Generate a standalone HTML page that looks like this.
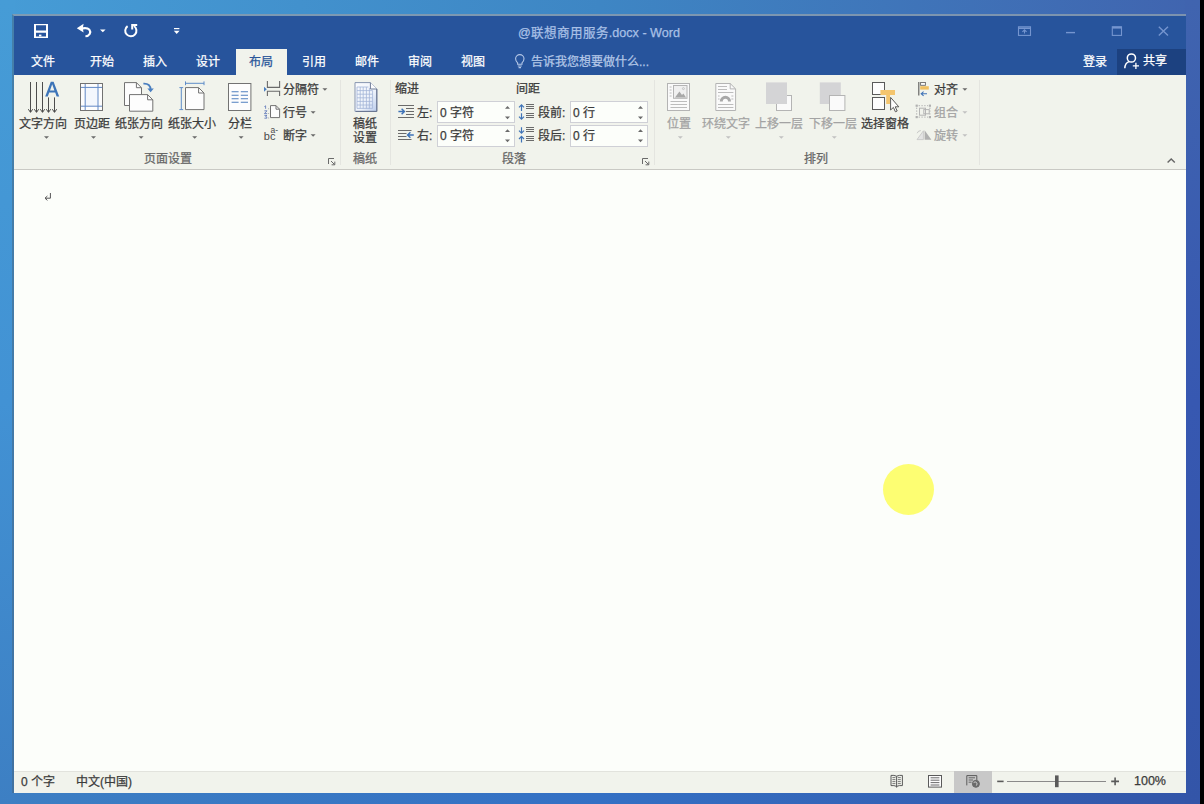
<!DOCTYPE html>
<html lang="zh-CN">
<head>
<meta charset="utf-8">
<title>@联想商用服务.docx - Word</title>
<style>
*{box-sizing:border-box;margin:0;padding:0}
html,body{width:1204px;height:804px;overflow:hidden}
body{position:relative;font-family:"Liberation Sans",sans-serif;font-size:12px;color:#3b3b3b;background:#3c74c0}
#dt{left:0;top:0;width:1200px;height:16px;background:linear-gradient(90deg,#469cd6 0%,#3e86c4 50%,#4064af 100%)}
#db{left:0;top:792px;width:1200px;height:12px;background:linear-gradient(90deg,#3d7fc3 0%,#3470c4 50%,#3355a8 100%)}
#dl{left:0;top:0;width:15px;height:804px;background:linear-gradient(180deg,#469cd6 0%,#4292d4 50%,#3d7fc3 100%)}
#dr{left:1185px;top:0;width:15px;height:804px;background:linear-gradient(180deg,#4064af 0%,#3758b1 50%,#3355a8 100%)}
.abs,.t,.ic,svg.i{position:absolute}
.t{white-space:nowrap;line-height:16px;height:16px;overflow:visible;margin-top:1px;-webkit-text-stroke:.25px currentColor}
.c{text-align:center}
.w{color:#fff}
.g{color:#a3a3a3}
#blk{left:1200px;top:0;width:4px;height:804px;background:#000}
#win{left:12px;top:14px;width:1174px;height:779px;background:#fcfefa;background-clip:padding-box;border-top:2px solid rgba(135,155,175,.85);border-left:2px solid rgba(70,100,125,.5)}
#title{left:14px;top:16px;width:1172px;height:59px;background:#27549c}
#share{left:1117px;top:49px;width:69px;height:26px;background:#1c4180}
#tab{left:236px;top:49px;width:51px;height:27px;background:#f1f3ec}
#ribbon{left:14px;top:75px;width:1172px;height:95px;background:#f1f3ec;border-bottom:1px solid #c9c9c4}
#status{left:14px;top:771px;width:1172px;height:22px;background:#f1f3ec;border-top:1px solid #e2e3dd}
#websel{left:954px;top:771px;width:38px;height:22px;background:#c8c8c8}
.sep{width:1px;background:#e4e5e0;top:80px;height:85px}
.box{background:#fcfefa;border:1px solid #cfd0d6;height:22px}
#dot{left:883px;top:464px;width:51px;height:51px;border-radius:50%;background:#fdfe72}
</style>
</head>
<body>
<div class="abs" id="dt"></div>
<div class="abs" id="db"></div>
<div class="abs" id="dl"></div>
<div class="abs" id="dr"></div>
<div class="abs" id="blk"></div>
<div class="abs" id="win"></div>
<div class="abs" id="title"></div>
<div class="abs" id="share"></div>
<div class="abs" id="tab"></div>
<div class="abs" id="ribbon"></div>
<div class="abs" id="status"></div>
<div class="abs" id="websel"></div>
<div class="abs" id="dot"></div>

<!-- TITLE BAR -->
<div class="t c" style="left:499px;top:24px;width:200px;font-size:12.6px;color:#a9c0e6">@联想商用服务.docx - Word</div>

<!-- TABS -->
<div class="t c w" style="left:23px;top:53px;width:40px">文件</div>
<div class="t c w" style="left:82px;top:53px;width:40px">开始</div>
<div class="t c w" style="left:135px;top:53px;width:40px">插入</div>
<div class="t c w" style="left:188px;top:53px;width:40px">设计</div>
<div class="t c" style="left:241px;top:53px;width:40px;color:#2b579a">布局</div>
<div class="t c w" style="left:294px;top:53px;width:40px">引用</div>
<div class="t c w" style="left:347px;top:53px;width:40px">邮件</div>
<div class="t c w" style="left:400px;top:53px;width:40px">审阅</div>
<div class="t c w" style="left:453px;top:53px;width:40px">视图</div>
<div class="t" style="left:531px;top:53px;color:#b4c7e7">告诉我您想要做什么...</div>
<div class="t c w" style="left:1075px;top:53px;width:40px">登录</div>
<div class="t w" style="left:1143px;top:52px">共享</div>

<!-- RIBBON: 页面设置 -->
<div class="t c" style="left:13px;top:115px;width:60px">文字方向</div>
<div class="t c" style="left:62px;top:115px;width:60px">页边距</div>
<div class="t c" style="left:109px;top:115px;width:60px">纸张方向</div>
<div class="t c" style="left:162px;top:115px;width:60px">纸张大小</div>
<div class="t c" style="left:210px;top:115px;width:60px">分栏</div>
<div class="t" style="left:283px;top:81px">分隔符</div>
<div class="t" style="left:283px;top:104px">行号</div>
<div class="t" style="left:283px;top:127px">断字</div>
<div class="t c" style="left:138px;top:150px;width:60px;color:#666">页面设置</div>

<!-- RIBBON: 稿纸 -->
<div class="t c" style="left:335px;top:115px;width:60px">稿纸</div>
<div class="t c" style="left:335px;top:129px;width:60px">设置</div>
<div class="t c" style="left:335px;top:150px;width:60px;color:#666">稿纸</div>

<!-- RIBBON: 段落 -->
<div class="t" style="left:395px;top:80px">缩进</div>
<div class="t" style="left:516px;top:80px">间距</div>
<div class="t" style="left:417px;top:104px">左:</div>
<div class="t" style="left:417px;top:127px">右:</div>
<div class="t" style="left:538px;top:104px">段前:</div>
<div class="t" style="left:538px;top:127px">段后:</div>
<div class="abs box" style="left:437px;top:101px;width:78px"></div>
<div class="abs box" style="left:437px;top:125px;width:78px;height:22px"></div>
<div class="abs box" style="left:570px;top:101px;width:78px"></div>
<div class="abs box" style="left:570px;top:125px;width:78px;height:22px"></div>
<div class="t" style="left:440px;top:104px">0 字符</div>
<div class="t" style="left:440px;top:127px">0 字符</div>
<div class="t" style="left:573px;top:104px">0 行</div>
<div class="t" style="left:573px;top:127px">0 行</div>
<div class="t c" style="left:484px;top:150px;width:60px;color:#666">段落</div>

<!-- RIBBON: 排列 -->
<div class="t c g" style="left:649px;top:115px;width:60px">位置</div>
<div class="t c g" style="left:696px;top:115px;width:60px">环绕文字</div>
<div class="t c g" style="left:749px;top:115px;width:60px">上移一层</div>
<div class="t c g" style="left:803px;top:115px;width:60px">下移一层</div>
<div class="t c" style="left:855px;top:115px;width:60px">选择窗格</div>
<div class="t" style="left:934px;top:81px">对齐</div>
<div class="t g" style="left:934px;top:104px">组合</div>
<div class="t g" style="left:934px;top:127px">旋转</div>
<div class="t c" style="left:786px;top:150px;width:60px;color:#666">排列</div>

<!-- separators -->
<div class="abs sep" style="left:340px"></div>
<div class="abs sep" style="left:390px"></div>
<div class="abs sep" style="left:654px"></div>
<div class="abs sep" style="left:979px"></div>

<!-- STATUS BAR -->
<div class="t" style="left:21px;top:773px">0 个字</div>
<div class="t" style="left:76px;top:773px">中文(中国)</div>
<div class="t" style="left:1134px;top:772px;font-size:12.5px">100%</div>

<svg class="abs" style="left:0;top:0" width="1204" height="804" viewBox="0 0 1204 804" fill="none">
<!-- ===== QAT ===== -->
<g fill="#fff" stroke="none">
 <path fill-rule="evenodd" d="M34,24H48V38H34Z M36,25.2H46V30.6H36Z M36,32.8H46V36.4H36Z"/>
 <rect x="39" y="34.6" width="2.4" height="1.8"/>
 <path d="M76.8,28.2 L83.6,23.8 L83,27.2 Q88,26.6 90.2,29 Q92.2,31.6 90.6,34.4 Q89,37 85.6,37.2 L85.2,35.4 Q88,35 88.9,33.2 Q89.6,31.2 88.2,29.9 Q86.6,28.8 83,29.4 L83.6,32.4 Z"/>
 <path d="M100,29.4H105.6L102.8,32.3Z"/>
 <rect x="174" y="28" width="5.4" height="1.2"/>
 <path d="M173.8,30.8H179.6L176.7,34Z"/>
</g>
<g stroke="#fff" stroke-width="2" fill="none">
 <path d="M133.9,26 A5.6,5.6 0 1 1 127.6,26.1"/>
 <path d="M132.2,29.4 V24.9 H137.2"/>
</g>
<!-- ===== window controls (inactive tint) ===== -->
<g stroke="#7595cf" stroke-width="1.1" fill="none">
 <rect x="1018.5" y="26.8" width="12" height="8.6"/>
 <path d="M1018.5,28.2H1030.5" stroke-width="1.6"/>
 <path d="M1024.5,33.6V29.8M1022.4,31.8L1024.5,29.8L1026.6,31.8"/>
 <path d="M1066,32.6H1075" stroke-width="1.4"/>
 <rect x="1112.3" y="26.8" width="9.2" height="8.6"/>
 <path d="M1112.3,27.6H1121.5" stroke-width="2"/>
 <path d="M1158.8,26.8L1168,35.6M1168,26.8L1158.8,35.6" stroke-width="1.4"/>
</g>
<!-- lightbulb -->
<g stroke="#b4c7e7" stroke-width="1.1" fill="none">
 <path d="M517.6,64.2 V62.8 Q515.6,61 515.6,58.8 A4.2,4.2 0 0 1 524,58.8 Q524,61 522,62.8 V64.2 Z"/>
 <path d="M517.8,66H521.8M518.6,67.6H521"/>
</g>
<!-- share person -->
<g stroke="#fff" stroke-width="1.5" fill="none">
 <circle cx="1131.4" cy="58" r="4.1"/>
 <path d="M1124.8,68.2 Q1125,63 1129.2,61.6"/>
 <path d="M1132.8,65.8H1139M1135.9,62.7V68.9" stroke-width="1.3"/>
</g>
<!-- ===== status bar icons ===== -->
<g stroke="#5a5a5a" stroke-width="1" fill="none">
 <!-- read mode -->
 <path d="M896.6,776.2 Q894,775 891,775.4 V785.6 Q894,785.2 896.6,786.4 Q899.2,785.2 902.4,785.6 V775.4 Q899.2,775 896.6,776.2 V787.6"/>
 <path d="M892.4,777.6H895.4M892.4,779.6H895.4M892.4,781.6H895.4M892.4,783.6H895.4M897.8,777.6H900.8M897.8,779.6H900.8M897.8,781.6H900.8M897.8,783.6H900.8" stroke-width=".8"/>
 <!-- print layout -->
 <rect x="928.5" y="775.5" width="13" height="11.6" fill="#fcfcfc"/>
 <path d="M930.6,777.8H939.4M930.6,780.2H939.4M930.6,782.6H939.4M930.6,785H939.4" stroke-width=".9"/>
 <!-- web layout -->
 <path d="M966.8,785.4V775.6H976.8V780"/>
 <path d="M968.6,777.8H975M968.6,780H973M968.6,782.2H971.6" stroke-width=".9"/>
 <circle cx="975.9" cy="783.8" r="3.5" fill="#6a6a6a" stroke="#6a6a6a"/>
 <path d="M973.6,782.6Q975.2,781.2 976.4,782.4Q977.8,783.8 976.4,785.6" stroke="#d8d8d8" stroke-width=".9"/>
 <!-- zoom slider -->
 <path d="M997.2,781.4H1003.6" stroke-width="1.6"/>
 <path d="M1007,781.5H1106" stroke="#8a8a8a" stroke-width="1"/>
 <rect x="1055" y="775.4" width="3.6" height="11.8" fill="#5a5a5a" stroke="none"/>
 <path d="M1111.2,781.4H1119M1115.1,777.5V785.3" stroke-width="1.6"/>
</g>
<!-- ribbon collapse caret -->
<path d="M1167.6,162.6L1171.2,159L1174.8,162.6" stroke="#666" stroke-width="1.4"/>
<!-- paragraph mark -->
<path d="M50.4,193V198.2H45.2M47.4,196L45,198.2L47.4,200.4" stroke="#555" stroke-width="1"/>
<!-- ===== 文字方向 ===== -->
<g stroke="#4c4c4c" stroke-width="1" fill="none">
 <path d="M30.5,82V112M36.5,82V112M42.5,82V112M48.5,97.4V112M54.5,97.4V112"/>
 <path d="M28.3,109.2L30.5,112.4L32.7,109.2M34.3,109.2L36.5,112.4L38.7,109.2M40.3,109.2L42.5,112.4L44.7,109.2M46.3,109.2L48.5,112.4L50.7,109.2M52.3,109.2L54.5,112.4L56.7,109.2"/>
</g>
<path fill="#3d74b8" fill-rule="evenodd" d="M45.2,96.6L50.8,81.8H53.6L59.2,96.6H56.6L55.2,92.6H49.2L47.8,96.6Z M50,90.5H54.4L52.2,84.2Z"/>
<!-- ===== 页边距 ===== -->
<rect x="80.5" y="83.5" width="22" height="27" fill="#fdfdfd" stroke="#727272"/>
<rect x="85.2" y="87.4" width="12.8" height="18.8" fill="#f3f7fd" stroke="none"/>
<path d="M85.2,84V110M98,84V110M81,87.4H102M81,106.2H102" stroke="#6189c6" stroke-width="1"/>
<!-- ===== 纸张方向 ===== -->
<g stroke="#727272" stroke-width="1" fill="#fdfdfd">
 <path d="M124.5,82.6H136.4L141.5,87.7V105.5H124.5Z"/>
 <path d="M136.4,82.6V87.7H141.5" fill="none"/>
 <path d="M129.5,94.6H147.6L152.8,99.8V111.2H129.5Z"/>
 <path d="M147.6,94.6V99.8H152.8" fill="none"/>
</g>
<path d="M143.4,83.6Q150.6,83.2 150.6,90" stroke="#4a7fc0" stroke-width="1.8" fill="none"/>
<path d="M147.4,88.4L150.6,92.2L153.8,88.4Z" fill="#4a7fc0"/>
<!-- ===== 纸张大小 ===== -->
<g stroke="#727272" stroke-width="1" fill="#fdfdfd">
 <path d="M185.5,87.6H198.6L204,93V109.6H185.5Z"/>
 <path d="M198.6,87.6V93H204" fill="none"/>
</g>
<path d="M181.3,87.6V109.6M179.4,87.6H183.2M179.4,109.6H183.2M185.5,83.3H204M185.5,81.4V85.2M204,81.4V85.2" stroke="#5e8cc8" stroke-width="1"/>
<!-- ===== 分栏 ===== -->
<rect x="228.5" y="83.5" width="22.4" height="27" fill="#fdfdfd" stroke="#727272"/>
<path d="M231.6,91.7H238.6M231.6,95.2H238.6M231.6,98.7H238.6M231.6,102.2H238.6M240.8,91.7H248M240.8,95.2H248M240.8,98.7H248M240.8,102.2H248" stroke="#4f7fbf" stroke-width="1.1"/>
<!-- ===== 分隔符 ===== -->
<path d="M267.4,81V87.4H279.6V81M267.4,96V91.2H279.6V96" stroke="#6a6a6a" stroke-width="1.1" fill="none"/>
<path d="M264,86.8L266.8,89.3L264,91.8Z" fill="#4a7fc0"/>
<!-- ===== 行号 ===== -->
<g stroke="#727272" stroke-width="1" fill="#fdfdfd">
 <path d="M270.5,105.6H276L279.6,109.2V117.6H270.5Z"/>
 <path d="M276,105.6V109.2H279.6" fill="none"/>
</g>
<path d="M265.6,105.8V108.8M264.4,106.6L265.6,105.8M264.4,110.8H267L264.4,113.6H267.2M264.4,115.4H267L265.6,116.6Q267.4,117 266.8,118.2H264.4" stroke="#5670b6" stroke-width=".8" fill="none"/><path d="M268.6,108.4V109.2M268.6,113V113.8M268.6,117.6V118.4" stroke="#8a8a8a" stroke-width=".8"/>
<!-- ===== 断字 ===== -->
<text x="263.8" y="140.3" font-family="Liberation Sans" font-size="11" fill="#4a4a4a" stroke="none">bc</text>
<text x="270.6" y="132.9" font-family="Liberation Sans" font-size="8.5" fill="#4a4a4a" stroke="none">a-</text>
<!-- dropdown arrows (enabled) -->
<g fill="#6a6a6a">
 <path d="M44,136.2H49L46.5,138.8Z"/>
 <path d="M91,136.2H96L93.5,138.8Z"/>
 <path d="M138.6,136.2H143.6L141.1,138.8Z"/>
 <path d="M192.2,136.2H197.2L194.7,138.8Z"/>
 <path d="M238.6,136.2H243.6L241.1,138.8Z"/>
 <path d="M322.4,88.2H327.4L324.9,90.8Z"/>
 <path d="M310.6,111.2H315.6L313.1,113.8Z"/>
 <path d="M310.6,134.2H315.6L313.1,136.8Z"/>
 <path d="M962.4,88.2H967.4L964.9,90.8Z"/>
</g>
<!-- dialog launchers -->
<g stroke="#6a6a6a" stroke-width="1" fill="none">
 <path d="M328.5,164V158.5H334M331,161L334.6,164.6M334.8,161.6V164.8H331.6"/>
 <path d="M642.5,164V158.5H648M645,161L648.6,164.6M648.8,161.6V164.8H645.6"/>
</g>
<!-- ===== 稿纸设置 ===== -->
<defs><linearGradient id="gz" x1="0" y1="0" x2="1" y2="1"><stop offset="0" stop-color="#fbfcfe"/><stop offset=".6" stop-color="#eef3fb"/><stop offset="1" stop-color="#b9cbec"/></linearGradient></defs>
<path d="M355,82.6H370.4L376.8,89V111.4H355Z" fill="url(#gz)" stroke="#8795b0" stroke-width="1"/>
<path d="M370.4,82.6V89H376.8" fill="#fdfdfe" stroke="#6f7c96" stroke-width="1"/>
<path d="M376.8,89V111.4H356" fill="none" stroke="#66738f" stroke-width="1"/>
<path d="M357,87H368.4M357,90.6H372.6M357,94.2H372.6M357,97.8H372.6M357,101.4H372.6M357,105H372.6M357,108.4H372.6M357,87V108.4M360.2,87V108.4M363.2,87V108.4M366.4,87V108.4M369.4,88V108.4M372.6,90.6V108.4" stroke="#a3b5d8" stroke-width=".8" fill="none"/>
<!-- ===== indent icons ===== -->
<g stroke="#6a6a6a" stroke-width="1" fill="none">
 <path d="M398,105.5H414M406,108.5H414M406,111.5H414M406,114.5H414M398,117.5H414"/>
 <path d="M398,130.5H411.5M398,133.5H406.5M398,136.5H406.5M398,139.5H411.5"/>
</g>
<g stroke="#3f73b7" stroke-width="1.5" fill="none">
 <path d="M398.4,111.5H404M401.6,108.8L404.4,111.5L401.6,114.2"/>
 <path d="M413.8,135H408M410.4,132.3L407.6,135L410.4,137.7"/>
</g>
<!-- ===== spacing icons ===== -->
<g stroke="#3f73b7" stroke-width="1.2" fill="none">
 <path d="M521.5,111V104.8M519,107.4L521.5,104.8L524,107.4"/>
 <path d="M521.5,113.2V119.2M519,116.6L521.5,119.2L524,116.6"/>
 <path d="M521.5,127.2V133.2M519,130.6L521.5,133.2L524,130.6"/>
 <path d="M521.5,142.6V136.4M519,139L521.5,136.4L524,139"/>
</g>
<path d="M526,104.5H534M526,106.5H534M526,108.5H534M526,113.5H534M526,115.5H534M526,117.5H534M526,127.5H534M526,129.5H534M526,131.5H534M526,136.5H534M526,138.5H534M526,140.5H534" stroke="#6a6a6a" stroke-width="1"/>
<!-- spinner arrows -->
<g fill="#6a6a6a">
 <path d="M505,108.8H510L507.5,106Z"/><path d="M505,116.4H510L507.5,119.2Z"/>
 <path d="M505,132H510L507.5,129.2Z"/><path d="M505,139.4H510L507.5,142.2Z"/>
 <path d="M638,108.8H643L640.5,106Z"/><path d="M638,116.4H643L640.5,119.2Z"/>
 <path d="M638,132H643L640.5,129.2Z"/><path d="M638,139.4H643L640.5,142.2Z"/>
</g>
<!-- ===== 位置 (disabled) ===== -->
<g stroke="#b4b4b4" stroke-width="1" fill="none">
 <rect x="667.5" y="83.5" width="22" height="27" fill="#fafafa"/>
 <rect x="673.5" y="85.5" width="13.5" height="12.8" fill="#f0f0f0"/>
 <path d="M670.5,101.5H687M670.5,104.5H687M670.5,107.5H687M669.6,87H671.6M669.6,90H671.6M669.6,93H671.6M669.6,96H671.6" stroke-width=".9"/>
 <path d="M675,97.4L679.4,91.6L682,95L683.4,93.4L686,97.4Z" fill="#a8a8a8" stroke="none"/>
 <circle cx="683.4" cy="88.6" r="1" stroke-width=".7"/>
</g>
<!-- ===== 环绕文字 (disabled) ===== -->
<g stroke="#b4b4b4" stroke-width="1" fill="none">
 <path d="M715.8,83.5H730.2L735.6,88.9V110.5H715.8Z" fill="#fafafa"/>
 <path d="M730.2,83.5V88.9H735.6"/>
 <path d="M718,86.5H727M718,89.5H727M718,92.5H733.4M718,104.5H733.4M718,107.5H733.4M718,96H719.6M718,99H719.6M731.4,96H733.4M731.4,99H733.4" stroke-width=".9"/>
 <path d="M719.8,101.4A5.6,5.6 0 0 1 731,101.4H728A2.6,2.6 0 0 0 722.8,101.4Z" fill="#a8a8a8" stroke="none"/>
</g>
<!-- ===== 上移一层 (disabled) ===== -->
<rect x="776.5" y="95.5" width="15" height="15" fill="#fafafa" stroke="#b4b4b4"/>
<rect x="766" y="82.4" width="21" height="21.6" fill="#d4d4d6"/>
<!-- ===== 下移一层 (disabled) ===== -->
<rect x="819.8" y="82.4" width="21" height="21.6" fill="#d4d4d6"/>
<rect x="829.5" y="95.5" width="15.4" height="15" fill="#fafafa" stroke="#b4b4b4"/>
<!-- disabled dropdown arrows -->
<g fill="#c2c2c2">
 <path d="M677.8,136.2H682.8L680.3,138.8Z"/>
 <path d="M725.8,136.2H730.8L728.3,138.8Z"/>
 <path d="M778.8,136.2H783.8L781.3,138.8Z"/>
 <path d="M831.8,136.2H836.8L834.3,138.8Z"/>
 <path d="M962.4,111.2H967.4L964.9,113.8Z"/>
 <path d="M962.4,134.2H967.4L964.9,136.8Z"/>
</g>
<!-- ===== 选择窗格 ===== -->
<rect x="872.5" y="82.5" width="12" height="12" fill="#fdfdfd" stroke="#5a5a5a"/>
<rect x="872.5" y="97.5" width="12" height="12" fill="#fdfdfd" stroke="#5a5a5a"/>
<path d="M880.4,90H895V95H890V104H886.2V95H880.4Z" fill="#f4c56e"/>
<path d="M890.6,97.4V110L893.4,107.4L895.4,111.8L897.2,111L895.2,106.8H898.8Z" fill="#fdfdfd" stroke="#5a5a5a" stroke-width="1" stroke-linejoin="round"/>
<!-- ===== 对齐 ===== -->
<path d="M918.8,82V95.6" stroke="#5a5a5a" stroke-width="1.1"/>
<rect x="920.6" y="82.5" width="4.8" height="2.8" fill="#fdfdfd" stroke="#6a6a6a" stroke-width=".9"/>
<rect x="920.2" y="86.2" width="8.6" height="3.4" fill="#f0c060"/>
<path d="M927,93.7H921.4M923.6,91.6L921.2,93.7L923.6,95.8" stroke="#3f73b7" stroke-width="1.1" fill="none"/>
<!-- ===== 组合 (disabled) ===== -->
<g fill="#b0b0b0">
 <rect x="915.6" y="104.6" width="2.2" height="2.2"/><rect x="928.8" y="104.6" width="2.2" height="2.2"/>
 <rect x="915.6" y="116" width="2.2" height="2.2"/><rect x="928.8" y="116" width="2.2" height="2.2"/>
</g>
<g stroke="#b4b4b4" stroke-width="1" fill="none">
 <path d="M918.6,105.7H928M918.6,117.1H928M916.7,107.6V115.2M929.9,107.6V115.2" stroke-dasharray="1.4,1.4"/>
 <rect x="919.5" y="108.2" width="6" height="7"/>
 <rect x="923.8" y="109.6" width="5.4" height="4.2"/>
</g>
<!-- ===== 旋转 (disabled) ===== -->
<path d="M923.4,130.8V139.6H917Z" fill="#e4e4e4" stroke="#c4c4c4" stroke-width=".8"/>
<path d="M924.6,130.2V139.8H931.4Z" fill="#b0b0b0"/>
<path d="M917.2,133.2Q918,130.6 920.8,130.6" stroke="#c0c0c0" stroke-width=".9" fill="none"/>
<!--MORE-->


</svg>

</body>
</html>
